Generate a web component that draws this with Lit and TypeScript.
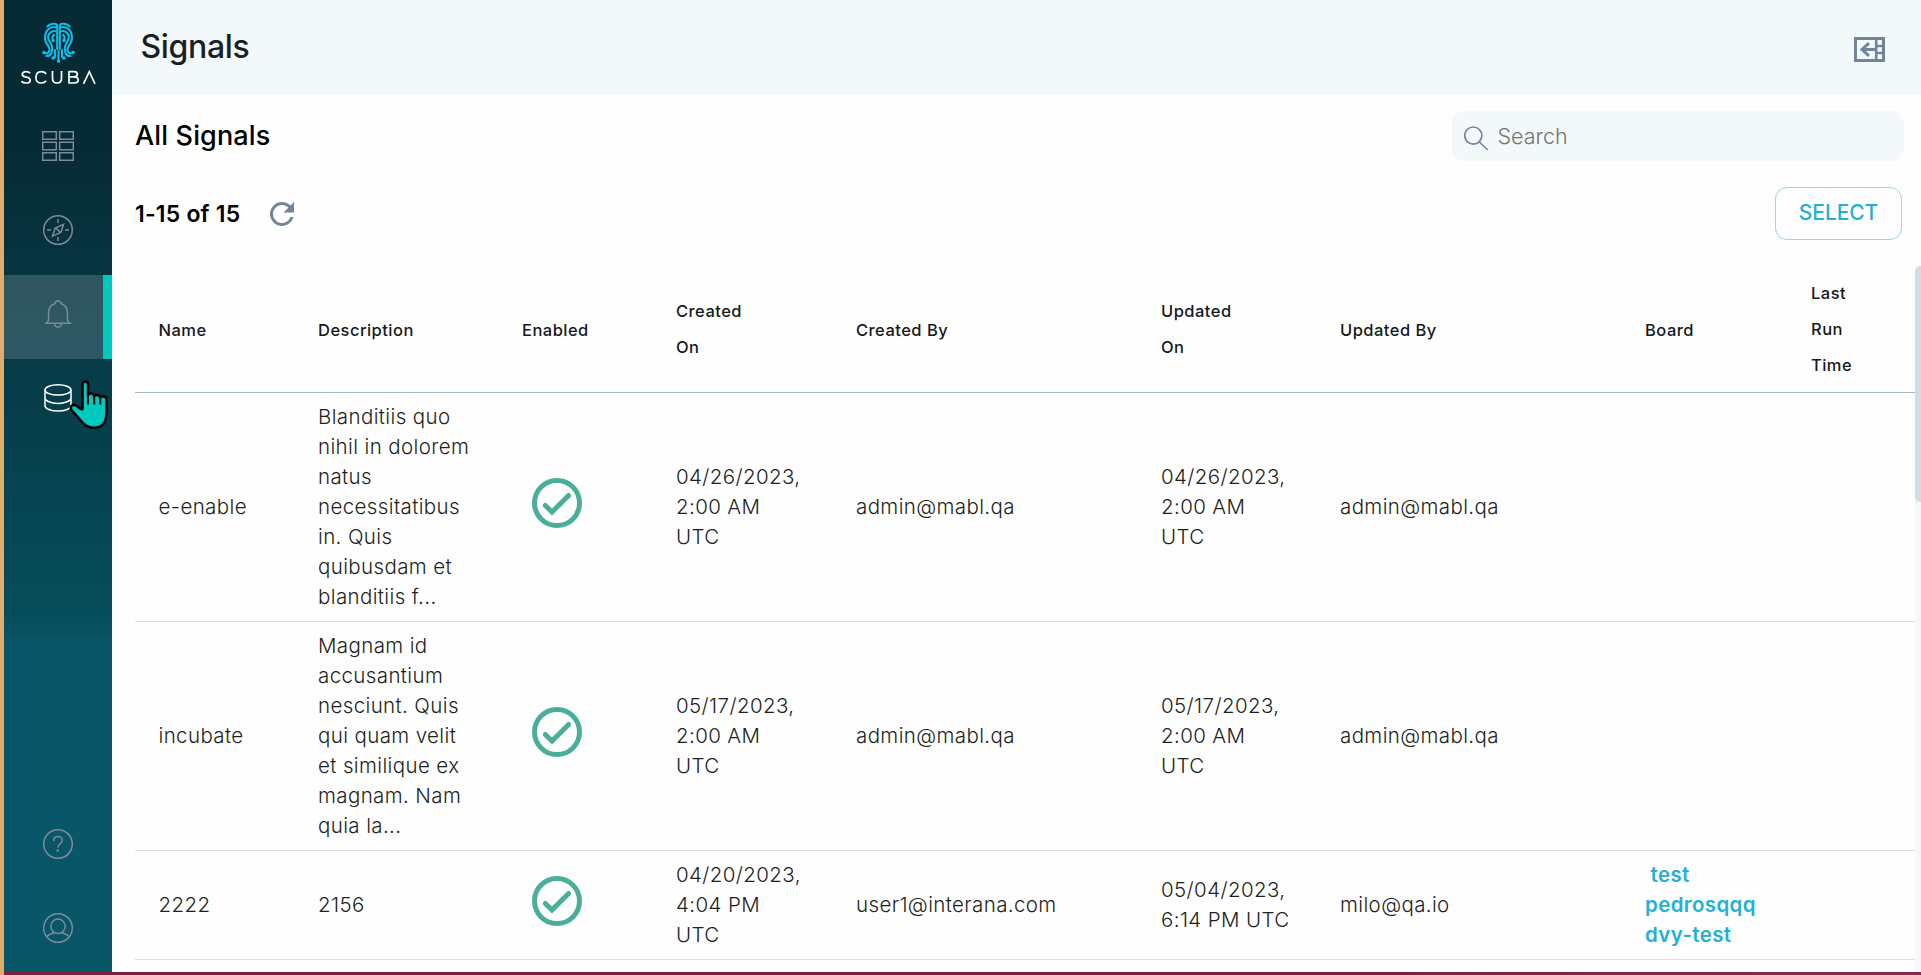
import { LitElement, html, css, svg } from "lit";
import { customElement } from "lit/decorators.js";
import { classMap } from "lit/directives/class-map.js";

interface Row {
  name: string;
  description: string;
  created: string;
  createdBy: string;
  updated: string;
  updatedBy: string;
  boards: string[];
}

const ROWS: Row[] = [
  {
    name: "e-enable",
    description: "Blanditiis quo nihil in dolorem natus necessitatibus in. Quis quibusdam et blanditiis f...",
    created: "04/26/2023, 2:00 AM UTC",
    createdBy: "admin@mabl.qa",
    updated: "04/26/2023, 2:00 AM UTC",
    updatedBy: "admin@mabl.qa",
    boards: [],
  },
  {
    name: "incubate",
    description: "Magnam id accusantium nesciunt. Quis qui quam velit et similique ex magnam. Nam quia la...",
    created: "05/17/2023, 2:00 AM UTC",
    createdBy: "admin@mabl.qa",
    updated: "05/17/2023, 2:00 AM UTC",
    updatedBy: "admin@mabl.qa",
    boards: [],
  },
  {
    name: "2222",
    description: "2156",
    created: "04/20/2023, 4:04 PM UTC",
    createdBy: "user1@interana.com",
    updated: "05/04/2023, 6:14 PM UTC",
    updatedBy: "milo@qa.io",
    boards: ["\u00a0test", "pedrosqqq", "dvy-test"],
  },
];

const HEADINGS = ["Name", "Description", "Enabled", "Created On", "Created By", "Updated On", "Updated By", "Board", "Last Run Time"];

const icons = {
  boards: svg`<path d="M.7 1.700h13.600v7.600H.7zM17.700 1.700h13.600v7.600H17.700zM.7 12.200h13.600v7.600H.7zM17.700 12.200h13.600v7.600H17.700zM.7 22.700h13.600v7.600H.7zM17.700 22.700h13.600v7.600H17.700z"/>`,
  compass: svg`<circle cx="16" cy="16" r="14.300"/><path d="M16 5v4M16 23v4M5 16h4M23 16h4M21.500 10.300l-2.500 8-8.500 3.800 2.800-8zM14 14.300l4 3.800"/>`,
  bell: svg`<path d="M2.800 25.300c3 0 3.800-2.200 3.800-5v-5.500c0-4.500 2.800-7.800 6-9 .6-2 1.800-3.100 3.400-3.100s2.800 1.100 3.400 3.100c3.200 1.200 6 4.500 6 9v5.500c0 2.800.8 5 3.800 5zM12.500 25.500c.2 2.200 1.600 3.700 3.500 3.700s3.300-1.500 3.500-3.700"/>`,
  data: svg`<ellipse cx="16" cy="7.900" rx="13" ry="5.200"/><path d="M3 7.900v15.800c0 2.900 5.800 5.400 13 5.400s13-2.500 13-5.400V7.900M3 16c0 2.900 5.800 5.400 13 5.400S29 18.900 29 16"/>`,
  help: svg`<circle cx="16" cy="16" r="14.300"/><path d="M11.800 13c0-2.600 1.700-4.400 4.200-4.400s4.200 1.500 4.200 4c0 3.300-4.400 3.400-4.400 7"/><circle cx="15.700" cy="22.500" r=".6" fill="currentColor"/>`,
  user: svg`<circle cx="16" cy="16" r="14.300"/><circle cx="16" cy="14.300" r="7.200"/><path d="M4.400 24.600c2.200-1.700 4.800-3.100 7.900-3.900M27.600 24.600c-2.200-1.700-4.800-3.100-7.900-3.900"/>`,
};

@customElement("side-nav")
export class SideNav extends LitElement {
  static styles = css`
    :host {
      display: flex;
      flex-direction: column;
      width: 108px;
      box-sizing: border-box;
      background: linear-gradient(180deg, #072b34 0, #072b34 150px, #063542 275px, #073f4c 430px, #064d5b 610px, #075162 633px, #085668 645px, #085668 100%);
    }
    .logo {
      height: 107px;
      box-sizing: border-box;
      padding: 22px 0 0 17px;
    }
    .logo svg { display: block; }
    .item {
      height: 84px;
      box-sizing: border-box;
      padding: 0 0 6px;
      display: flex;
      align-items: center;
      justify-content: center;
      color: #7b8b9b;
    }
    .item svg {
      display: block;
      width: 32px;
      height: 32px;
      fill: none;
      stroke: currentColor;
      stroke-width: 1.5;
    }
    .active {
      background: rgba(255, 255, 255, 0.16);
      border-right: 9px solid #00c9c0;
      padding-left: 9px;
    }
    .hover { color: #fff; }
    .spacer { flex: 1; }
    .foot { margin-bottom: -1px; }
  `;

  private item(icon: unknown, extra: Record<string, boolean> = {}) {
    return html`<div class=${classMap({ item: true, ...extra })}><svg viewBox="0 0 32 32">${icon}</svg></div>`;
  }

  render() {
    return html`
      <div class="logo">
        <svg width="76" height="64" viewBox="0 0 76 64" fill="none">
          <g stroke="#10bce9" stroke-width="2.100" stroke-linecap="round">
            ${[1, -1].map(
              (s) => svg`<g transform=${s === 1 ? "" : "translate(75 0) scale(-1 1)"}>
                <path d="M36.200 27V4Q36 1.800 33.500 1.800Q29 1.500 26.500 4.500"/>
                <path d="M35.500 5.500Q31 3.800 27 7.500Q23.500 11 24.200 17.500"/>
                <path d="M34.500 9.200Q31 8.400 28.500 11.500Q25.500 15 29 20Q32.500 25.500 30.500 31Q29 34.300 25.500 34"/>
                <path d="M33 12.800Q30.500 14.500 32 18.500"/>
                <path d="M24.200 17.500Q24.500 20.500 27 23.500Q29.500 27 28 29.800Q26 32.500 23 30.500"/>
                <path d="M34 28V34Q34 36 32.300 36.200"/>
                <circle cx="23" cy="30.500" r=".8"/><circle cx="32" cy="36" r=".7"/><circle cx="32" cy="18.500" r=".7"/>
              </g>`,
            )}
            <path d="M37.500 29V39"/><circle cx="37.500" cy="39" r=".8"/>
          </g>
          <g stroke="#fff" stroke-width="1.700">
            <path d="M9.200 51.300Q7.800 49.700 5 49.700Q1.300 49.700 1.300 52.300Q1.300 54.700 5 55.200Q9.200 55.800 9.200 58.400Q9.200 61 5 61Q2 61 .5 59.200"/>
            <path d="M25.200 51.800Q23.200 49.700 20.400 49.700Q14.900 49.700 14.900 55.400Q14.900 61 20.400 61Q23.200 61 25.200 58.900"/>
            <path d="M31.500 49V56.200Q31.500 61 36 61Q40.500 61 40.500 56.200V49"/>
            <path d="M48 49.700H53Q56.300 49.700 56.300 52.300Q56.300 54.900 53 54.900H48M53 54.900Q57.200 54.900 57.200 58Q57.200 61 53 61H48V49"/>
            <path d="M62.500 61.800L68.300 49.700L74 61.800"/>
          </g>
        </svg>
      </div>
      ${this.item(icons.boards)} ${this.item(icons.compass)} ${this.item(icons.bell, { active: true })}
      ${this.item(icons.data, { hover: true })}
      <div class="spacer"></div>
      ${this.item(icons.help)} ${this.item(icons.user, { foot: true })}
    `;
  }
}

@customElement("signal-table")
export class SignalTable extends LitElement {
  static styles = css`
    :host { display: block; }
    .row {
      display: grid;
      grid-template-columns: 159px 204px 154px 180px 305px 179px 305px 166px 128px;
      align-items: center;
      padding: 9px 0;
      border-bottom: 1px solid #dcdfe1;
      font-size: 20.5px;
      font-weight: 300;
      line-height: 30px;
      letter-spacing: 0.38px;
      color: #1d1f21;
    }
    .head {
      border-bottom-color: #a6b8c8;
      font-size: 16.5px;
      font-weight: 500;
      line-height: 36px;
      letter-spacing: 0.47px;
      color: #16191c;
    }
    .cell { padding: 0 24px; }
    .cell:first-child { padding-left: 23.5px; }
    .head .cell { padding-top: 1px; }
    .head .stack { padding-top: 0; padding-right: 70px; }
    .head .cell:last-child { padding-top: 0; padding-right: 48px; }
    .check { padding-left: 34px; }
    .check svg { display: block; margin-top: -8px; }
    .link {
      display: block;
      font-weight: 600;
      color: #25b0d3;
    }
  `;

  render() {
    return html`
      <div class="row head">
        ${HEADINGS.map((h) => html`<div class=${classMap({ cell: true, stack: h.endsWith("On") })}>${h}</div>`)}
      </div>
      ${ROWS.map(
        (r) => html`<div class="row">
          <div class="cell">${r.name}</div>
          <div class="cell">${r.description}</div>
          <div class="cell check">
            <svg width="50" height="50" viewBox="0 0 50 50" fill="none" stroke="#4aae9b">
              <circle cx="25" cy="25" r="22.500" stroke-width="5" />
              <path d="M13.300 27.500L20 34L36.600 17.500" stroke-width="5" stroke-linecap="round" />
            </svg>
          </div>
          <div class="cell">${r.created}</div>
          <div class="cell">${r.createdBy}</div>
          <div class="cell">${r.updated}</div>
          <div class="cell">${r.updatedBy}</div>
          <div class="cell">${r.boards.map((b) => html`<a class="link">${b}</a>`)}</div>
          <div class="cell"></div>
        </div>`,
      )}
    `;
  }
}

@customElement("app-root")
export class AppRoot extends LitElement {
  static styles = css`
    :host {
      display: flex;
      position: relative;
      width: 100%;
      height: 100vh;
      box-sizing: border-box;
      overflow: hidden;
      border-left: 4px solid #e1ad6b;
      background: #fefefe;
      font-family: Inter, "Liberation Sans", sans-serif;
    }
    .frame { flex: 1; display: flex; flex-direction: column; min-width: 0; }
    .shell { flex: 1; display: flex; min-height: 0; }
    .base { height: 3px; position: relative; background: linear-gradient(90deg, #7c1f40, #7c1f40 70%, #8c2850); }
    .main { flex: 1; min-width: 0; display: flex; flex-direction: column; }
    .header {
      height: 95px;
      box-sizing: border-box;
      padding: 3px 36px 0 28.5px;
      display: flex;
      align-items: center;
      justify-content: space-between;
      background: #f3f8fb;
    }
    .title { margin: 0 0 5px; font-size: 32px; font-weight: 500; line-height: 40px; letter-spacing: -0.35px; color: #1a1f26; }
    .bar {
      height: 50px;
      padding: 16px 17px 0 23px;
      display: flex;
      justify-content: space-between;
    }
    .sub { margin: 0; font-size: 27px; font-weight: 500; line-height: 50px; letter-spacing: 0.15px; color: #000; }
    .search {
      width: 452px;
      height: 50px;
      box-sizing: border-box;
      padding: 0 12px;
      display: flex;
      align-items: center;
      gap: 8.5px;
      border-radius: 12px;
      background: #f3f8fb;
      font-size: 21.5px;
      font-weight: 300;
      letter-spacing: 0;
      color: #757575;
    }
    .search svg { margin-top: 4px; }
    .tools {
      height: 53px;
      padding: 26px 19px 0 23px;
      display: flex;
      align-items: center;
    }
    .count { font-size: 23px; font-weight: 600; letter-spacing: 0.2px; color: #000; }
    .refresh { margin-left: 30px; margin-top: 1px; }
    .select {
      margin-left: auto;
      width: 127px;
      height: 53px;
      box-sizing: border-box;
      border: 1px solid #8fdaec;
      border-radius: 12px;
      text-align: center;
      line-height: 50px;
      font-size: 21px;
      font-weight: 500;
      letter-spacing: -0.1px;
      color: #25b0d3;
    }
    .scroll { flex: 1; min-height: 0; margin-top: 26px; padding-left: 23px; display: flex; overflow: hidden; }
    .table { flex: 1; }
    .track { width: 6px; background: #f3f8fb; }
    .thumb { height: 236px; border-radius: 5px 0 0 5px; background: #d3dbe3; }
    .pointer { position: absolute; left: 64px; top: 378px; }
  `;

  render() {
    return html`
      <div class="frame">
        <div class="shell">
          <side-nav></side-nav>
          <div class="main">
            <div class="header">
              <h1 class="title">Signals</h1>
              <svg width="31" height="25" viewBox="0 0 31 25" fill="none" stroke="#728699">
                <path d="M1.500 1.500h28v22h-28z" stroke-width="3" />
                <path d="M22.200 2v21M22 9h7M22 16h7" stroke-width="2.600" />
                <path d="M22 12.500H8M15 6.200L8 12.500L15 18.800" stroke-width="3" />
              </svg>
            </div>
            <div class="bar">
              <h2 class="sub">All Signals</h2>
              <div class="search">
                <svg width="25" height="25" viewBox="0 0 25 25" fill="none" stroke="#728699" stroke-width="1.700">
                  <circle cx="9.300" cy="9.600" r="8.600" />
                  <path d="M15.400 16l8.300 8" />
                </svg>
                <span>Search</span>
              </div>
            </div>
            <div class="tools">
              <div class="count">1-15 of 15</div>
              <svg class="refresh" width="24" height="24" viewBox="4 4 16 16" fill="#728699">
                <path d="M17.650 6.350A7.958 7.958 0 0 0 12 4a8 8 0 1 0 7.730 10h-2.080A6 6 0 1 1 12 6c1.660 0 3.140.690 4.220 1.780L13 11h7V4z" />
              </svg>
              <div class="select">SELECT</div>
            </div>
            <div class="scroll">
              <signal-table class="table"></signal-table>
              <div class="track"><div class="thumb"></div></div>
            </div>
          </div>
        </div>
        <div class="base"></div>
      </div>
      <svg class="pointer" width="42" height="54" viewBox="0 0 42 54">
        <path d="M14.500 31V6.500Q14.500 3.600 17.200 3.600T20 6.500V17Q21 15.300 23.200 15.300T26 18Q27 17 29.200 17T32.300 19.300Q33.300 18.200 35.500 18.200Q38.600 18.600 38.600 22V34Q38.600 49.800 26 49.800Q20 49.800 15.500 45.500L4 32.500Q1.700 29.600 3.500 28T8 27.600L12 30.500Q13.300 31.500 14.500 31z" fill="#00c9c0" stroke="#000" stroke-width="2.500" stroke-linejoin="round" />
        <path d="M20 16v10.500M26.200 18v8.500M32.300 19v7.500" stroke="#000" stroke-width="2" />
      </svg>
    `;
  }
}
